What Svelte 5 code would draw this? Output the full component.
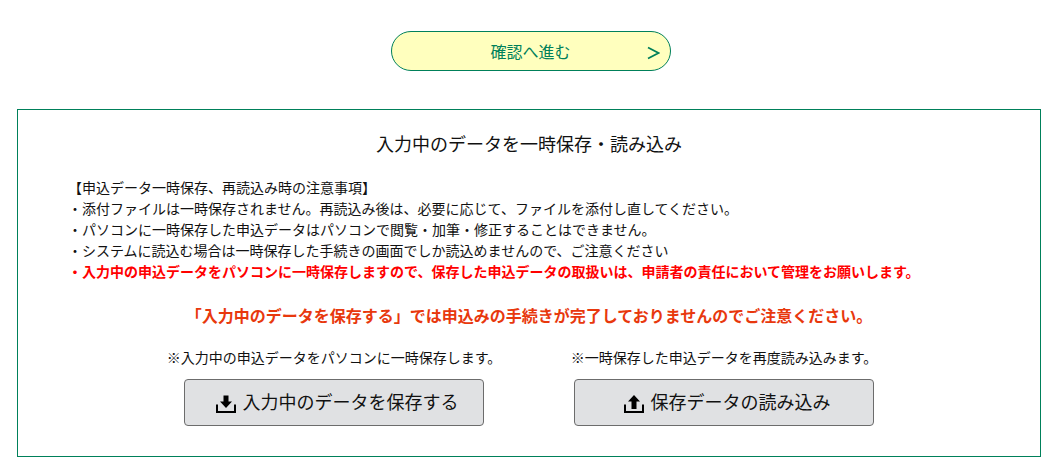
<script>
  const notes = [
    "・添付ファイルは一時保存されません。再読込み後は、必要に応じて、ファイルを添付し直してください。",
    "・パソコンに一時保存した申込データはパソコンで閲覧・加筆・修正することはできません。",
    "・システムに読込む場合は一時保存した手続きの画面でしか読込めませんので、ご注意ください",
  ];
</script>

<main class="page">
  <div class="next-wrap">
    <button class="next">
      <span>確認へ進む</span>
      <svg class="chevron" width="13" height="14" viewBox="0 0 13 14" aria-hidden="true">
        <path d="M1 1.5 L11.5 7 L1 12.5" fill="none" stroke="currentColor" stroke-width="1.8" />
      </svg>
    </button>
  </div>

  <section class="box">
    <h2>入力中のデータを一時保存・読み込み</h2>

    <div class="notes">
      <p>【申込データ一時保存、再読込み時の注意事項】</p>
      {#each notes as note}
        <p>{note}</p>
      {/each}
      <p class="red">・入力中の申込データをパソコンに一時保存しますので、保存した申込データの取扱いは、申請者の責任において管理をお願いします。</p>
    </div>

    <p class="warning">「入力中のデータを保存する」では申込みの手続きが完了しておりませんのでご注意ください。</p>

    <div class="actions">
      <div class="action">
        <p class="hint">※入力中の申込データをパソコンに一時保存します。</p>
        <button class="file-btn">
          <svg width="20" height="20" viewBox="0 0 20 20" aria-hidden="true">
            <path d="M7.5 2.5h5V8.5H16L10 15 4 8.5H7.5z" fill="#000" />
            <path d="M1 11.5v7.5h18v-7.5" fill="none" stroke="#000" stroke-width="2" />
          </svg>
          <span>入力中のデータを保存する</span>
        </button>
      </div>
      <div class="action">
        <p class="hint">※一時保存した申込データを再度読み込みます。</p>
        <button class="file-btn">
          <svg width="20" height="20" viewBox="0 0 20 20" aria-hidden="true">
            <path d="M7.5 16h5V8.5H16L10 2 4 8.5H7.5z" fill="#000" />
            <path d="M1 11.5v7.5h18v-7.5" fill="none" stroke="#000" stroke-width="2" />
          </svg>
          <span>保存データの読み込み</span>
        </button>
      </div>
    </div>
  </section>
</main>

<style>
  :global(body) {
    margin: 0;
    background: #fff;
  }

  .page {
    box-sizing: border-box;
    height: 467px;
    padding: 31px 20px 0 17px;
    font-family: "Noto Sans CJK JP", sans-serif;
    color: #111;
    overflow: hidden;
  }

  p {
    margin: 0;
  }

  .next-wrap {
    display: flex;
    justify-content: center;
    padding-left: 3px;
    margin-bottom: 38px;
  }

  .next {
    position: relative;
    box-sizing: border-box;
    width: 280px;
    height: 40px;
    padding: 0;
    border: 1px solid #00805a;
    border-radius: 20px;
    background: #ffffbe;
    color: #00805a;
    font: inherit;
    font-size: 16px;
  }

  .chevron {
    position: absolute;
    right: 10px;
    top: 14px;
  }

  .box {
    box-sizing: border-box;
    height: 348px;
    border: 1px solid #00805a;
    padding: 21px 0 0;
  }

  h2 {
    margin: 0 0 22px;
    font-size: 18px;
    font-weight: 400;
    line-height: 24px;
    text-align: center;
  }

  .notes {
    padding-left: 50px;
    font-size: 14px;
    line-height: 21px;
  }

  .red {
    color: #ff0000;
    font-weight: 700;
  }

  .warning {
    margin-top: 21px;
    color: #e8380d;
    font-size: 16px;
    font-weight: 700;
    line-height: 24px;
    text-align: center;
  }

  .actions {
    display: flex;
    justify-content: center;
    gap: 90px;
    margin-top: 20px;
  }

  .action {
    display: flex;
    flex-direction: column;
    align-items: center;
    width: 300px;
  }

  .hint {
    font-size: 14px;
    line-height: 21px;
    white-space: nowrap;
    margin-bottom: 11px;
  }

  .file-btn {
    display: flex;
    align-items: center;
    justify-content: center;
    gap: 7px;
    box-sizing: border-box;
    width: 300px;
    height: 47px;
    padding: 0 0 0 6px;
    border: 1px solid #6c6c6c;
    border-radius: 4px;
    background: #e0e1e3;
    color: #111;
    font: inherit;
    font-size: 18px;
  }

  .file-btn span {
    margin-top: -3px;
  }
</style>
